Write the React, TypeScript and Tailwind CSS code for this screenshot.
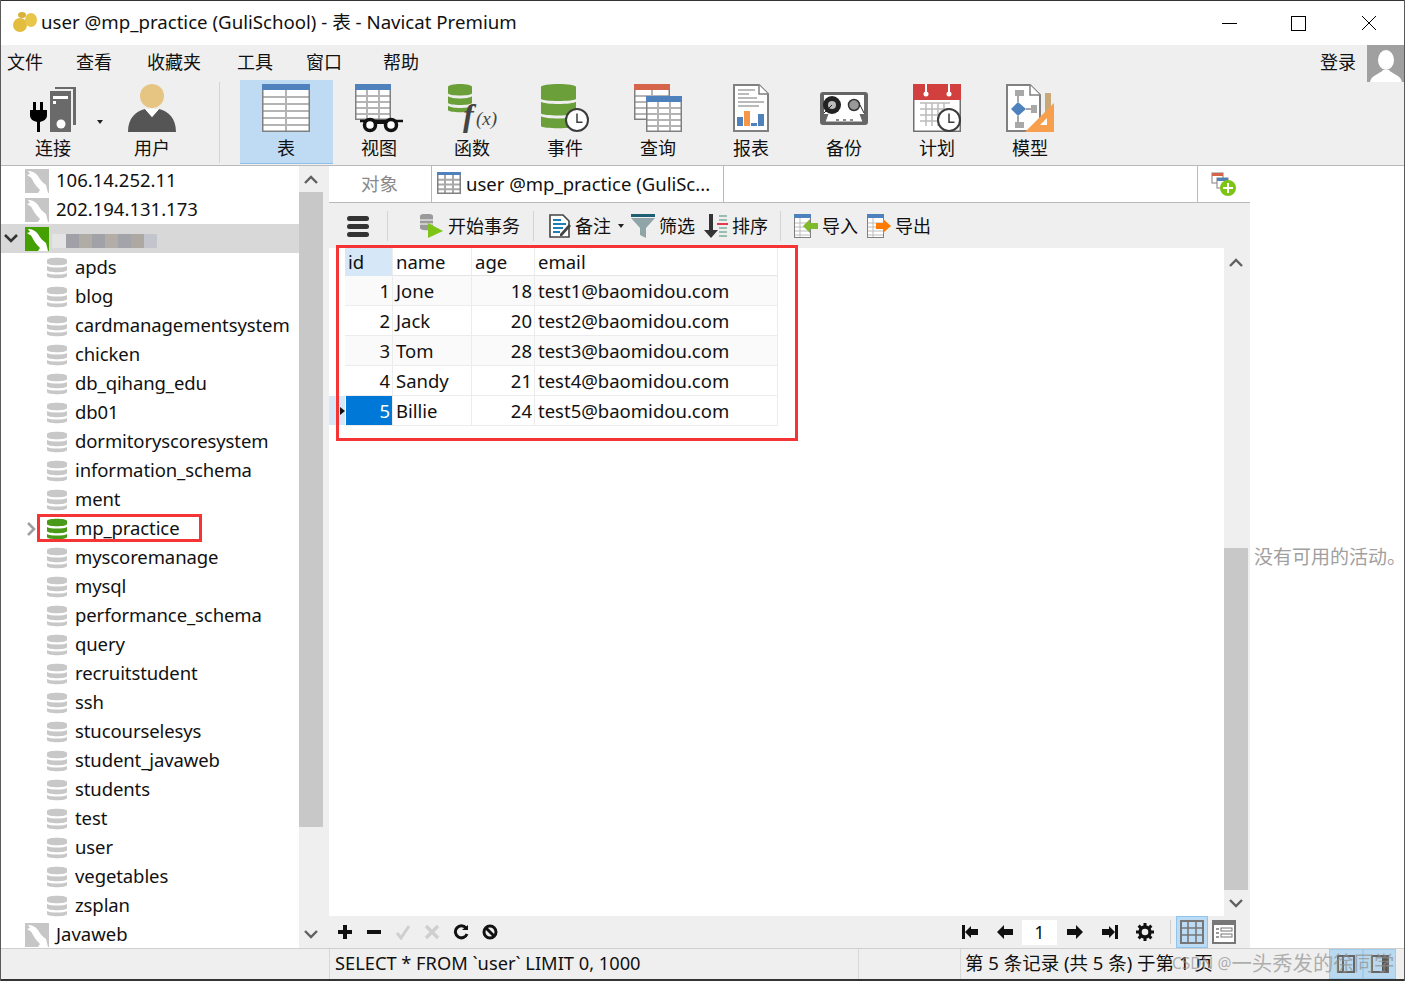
import React from "react";

// Navicat Premium main window

const dbs = ["apds","blog","cardmanagementsystem","chicken","db_qihang_edu","db01","dormitoryscoresystem","information_schema","ment","mp_practice","myscoremanage","mysql","performance_schema","query","recruitstudent","ssh","stucourselesys","student_javaweb","students","test","user","vegetables","zsplan"];

const rows = [
  { id: 1, name: "Jone", age: 18, email: "test1@baomidou.com" },
  { id: 2, name: "Jack", age: 20, email: "test2@baomidou.com" },
  { id: 3, name: "Tom", age: 28, email: "test3@baomidou.com" },
  { id: 4, name: "Sandy", age: 21, email: "test4@baomidou.com" },
  { id: 5, name: "Billie", age: 24, email: "test5@baomidou.com" },
];

function Dolphin({ bg = "#c6c6c6" }: { bg?: string }) {
  return (
    <svg width="24" height="24" viewBox="0 0 24 24" className="shrink-0">
      <rect width="24" height="24" fill={bg} />
      <path d="M3 2 C6 2 10 3 13 7 C15 11 18 14 21 16 L23 24 L13 24 L15 21 C13 19 10 16 8 12 C7 10 6 8 5 8 L2 6 L5 5 Z" fill="#fff" />
    </svg>
  );
}

function DbSmall({ color = "#c8c8c8" }: { color?: string }) {
  return (
    <svg width="20" height="22" viewBox="0 0 20 22" className="shrink-0">
      <path d="M0 3 C0 0 20 0 20 3 L20 6 C20 9 0 9 0 6 Z" fill={color} />
      <path d="M0 9 C3 11 17 11 20 9 L20 13 C20 16 0 16 0 13 Z" fill={color} />
      <path d="M0 16 C3 18 17 18 20 16 L20 19 C20 22 0 22 0 19 Z" fill={color} />
    </svg>
  );
}

function Cells({ x, y, w, h, cols, rws, head, headH, line = "#b4b4b4", frame = "#808080" }: { x: number; y: number; w: number; h: number; cols: number; rws: number; head: string; headH: number; line?: string; frame?: string }) {
  const bodyY = y + headH;
  const bodyH = h - headH;
  return (
    <g>
      <rect x={x} y={y} width={w} height={h} fill="#fff" />
      {Array.from({ length: rws - 1 }).map((_, i) => (
        <rect key={i} x={x} y={bodyY + ((i + 1) * bodyH) / rws - 1} width={w} height="2" fill={line} />
      ))}
      {Array.from({ length: cols - 1 }).map((_, i) => (
        <rect key={i} x={x + ((i + 1) * w) / cols - 1} y={bodyY} width="2" height={bodyH} fill={line} />
      ))}
      <rect x={x + 0.75} y={y + 0.75} width={w - 1.5} height={h - 1.5} fill="none" stroke={frame} strokeWidth="1.5" />
      <rect x={x} y={y} width={w} height={headH} fill={head} />
    </g>
  );
}

function Clock({ cx, cy, r }: { cx: number; cy: number; r: number }) {
  return (
    <g>
      <circle cx={cx} cy={cy} r={r} fill="#fff" stroke="#3c3c3c" strokeWidth="2" />
      <path d={`M${cx} ${cy - r * 0.6} V${cy + r * 0.2} H${cx + r * 0.5}`} fill="none" stroke="#3c3c3c" strokeWidth="1.5" />
    </g>
  );
}

function BigDb({ x, w, h }: { x: number; w: number; h: number }) {
  const seg = h / 3;
  return (
    <g fill="#6a9f3a">
      <path d={`M${x} 3 C${x} -1 ${x + w} -1 ${x + w} 3 V${seg} C${x + w} ${seg + 3} ${x} ${seg + 3} ${x} ${seg} Z`} />
      <path d={`M${x} ${seg + 3} C${x + 4} ${seg + 6} ${x + w - 4} ${seg + 6} ${x + w} ${seg + 3} V${2 * seg} C${x + w} ${2 * seg + 3} ${x} ${2 * seg + 3} ${x} ${2 * seg} Z`} />
      <path d={`M${x} ${2 * seg + 3} C${x + 4} ${2 * seg + 6} ${x + w - 4} ${2 * seg + 6} ${x + w} ${2 * seg + 3} V${h - 2} C${x + w} ${h + 1} ${x} ${h + 1} ${x} ${h - 2} Z`} />
    </g>
  );
}

const Svg48 = ({ children }: { children: React.ReactNode }) => (
  <svg width="48" height="48" viewBox="0 0 48 48" className="overflow-visible">{children}</svg>
);

const toolIcons: Record<string, React.ReactNode> = {
  conn: (
    <Svg48>
      <path d="M4 18 h3 v8 h4 v-8 h3 v8 h4 v5 c0 4 -3 6 -7 7 v10 h-3 v-10 c-4 -1 -7 -3 -7 -7 v-5 h3 z" fill="#000" />
      <path d="M26 3 h21 v38 h-3 V5 h-18 z" fill="#6a6a6a" />
      <rect x="21" y="7" width="21" height="41" fill="#6a6a6a" />
      <rect x="24" y="12" width="15" height="3" fill="#fff" />
      <rect x="24" y="17" width="3" height="3" fill="#fff" />
      <circle cx="32" cy="40" r="4.5" fill="#fff" />
    </Svg48>
  ),
  user: (
    <Svg48>
      <circle cx="24" cy="12" r="12" fill="#e6c583" />
      <path d="M0 48 C0 34 8 27 17 25 L24 33 L31 25 C40 27 48 34 48 48 Z" fill="#555" />
      <path d="M17 25 H31 L24 33 Z" fill="#fff" />
    </Svg48>
  ),
  table: (
    <Svg48>
      <Cells x={0} y={0} w={48} h={48} cols={2} rws={6} head="#4f81bd" headH={6} />
    </Svg48>
  ),
  view: (
    <Svg48>
      <Cells x={0} y={0} w={36} h={36} cols={3} rws={5} head="#4f81bd" headH={6} />
      <path d="M5 37 H48" stroke="#111" strokeWidth="2.5" />
      <circle cx="15" cy="41" r="5.5" fill="#fff" stroke="#111" strokeWidth="3.5" />
      <circle cx="36" cy="41" r="5.5" fill="#fff" stroke="#111" strokeWidth="3.5" />
      <path d="M20 39 H31" stroke="#111" strokeWidth="2" />
    </Svg48>
  ),
  func: (
    <Svg48>
      <BigDb x={0} w={24} h={28} />
      <text x="15" y="42" fontFamily="'Liberation Serif',serif" fontStyle="italic" fontWeight="700" fontSize="32" fill="#444">f</text>
      <text x="28" y="41" fontFamily="'Liberation Serif',serif" fontStyle="italic" fontSize="19" fill="#444">(x)</text>
    </Svg48>
  ),
  event: (
    <Svg48>
      <BigDb x={0} w={35} h={44} />
      <Clock cx={36} cy={36} r={11} />
    </Svg48>
  ),
  query: (
    <Svg48>
      <Cells x={0} y={0} w={36} h={36} cols={2} rws={5} head="#d6644a" headH={6} />
      <Cells x={12} y={12} w={36} h={36} cols={3} rws={5} head="#4f81bd" headH={6} />
    </Svg48>
  ),
  report: (
    <Svg48>
      <g transform="translate(6 0)">
        <path d="M1 1 H26 L35 10 V47 H1 Z" fill="#fff" stroke="#808080" strokeWidth="2" />
        <path d="M26 1 V10 H35" fill="#fff" stroke="#808080" strokeWidth="1.5" />
        <path d="M5 6 H22 M5 10 H16 M5 14 H24 M5 18 H31 M5 22 H26" stroke="#777" strokeWidth="1.2" />
        <rect x="4" y="33" width="6" height="9" fill="#4f81bd" />
        <rect x="11" y="27" width="6" height="15" fill="#f79646" />
        <rect x="18" y="39" width="6" height="3" fill="#4f81bd" />
        <rect x="25" y="30" width="6" height="12" fill="#4f81bd" />
      </g>
    </Svg48>
  ),
  backup: (
    <Svg48>
      <rect x="0" y="8" width="48" height="33" rx="3" fill="#666" />
      <rect x="4" y="11" width="40" height="19" fill="#fff" />
      <circle cx="12" cy="21" r="9" fill="#222" />
      <circle cx="12" cy="21" r="4" fill="#bbb" />
      <circle cx="34" cy="21" r="5.5" fill="#999" stroke="#333" strokeWidth="1.5" />
      <path d="M4 29 L12 21 M40 21 L44 29" stroke="#222" />
      <path d="M8 30 L5 38 H43 L40 30" fill="#fff" stroke="#666" />
      <path d="M16 36 h3 M23 36 h3 M30 36 h3" stroke="#666" strokeWidth="1.5" />
    </Svg48>
  ),
  plan: (
    <Svg48>
      <rect x="0.75" y="10" width="46.5" height="37.25" fill="#fff" stroke="#707070" strokeWidth="1.5" />
      <rect x="0" y="0" width="48" height="16" fill="#d13f3f" />
      <path d="M13 0 V9 M36 0 V9" stroke="#fff" strokeWidth="2" />
      <circle cx="13" cy="10" r="2.5" fill="#fff" />
      <circle cx="36" cy="10" r="2.5" fill="#fff" />
      <path d="M7 19 H37 M7 25 H37 M7 31 H30 M7 37 H26 M13 19 V42 M19 19 V42 M25 19 V42 M31 19 V32" stroke="#bbb" strokeWidth="1.5" />
      <Clock cx={36} cy={36} r={11} />
    </Svg48>
  ),
  model: (
    <Svg48>
      <path d="M1 1 H24 L34 11 V47 H1 Z" fill="#fff" stroke="#808080" strokeWidth="2" />
      <path d="M24 1 V11 H34" fill="#fff" stroke="#808080" strokeWidth="1.5" />
      <rect x="9" y="6" width="9" height="6" fill="#a8a8a8" />
      <rect x="11" y="12" width="2" height="6" fill="#a8a8a8" />
      <path d="M5 25 L12 18 L20 25 L12 32 Z" fill="#4f81bd" />
      <rect x="20" y="24" width="7" height="2" fill="#a8a8a8" />
      <rect x="25" y="21" width="6" height="8" fill="#a8a8a8" />
      <rect x="11" y="32" width="2" height="6" fill="#a8a8a8" />
      <rect x="9" y="38" width="9" height="6" fill="#a8a8a8" />
      <rect x="39" y="9" width="6" height="24" fill="#c9a878" />
      <path d="M19 48 L48 19 V48 Z" fill="#f79f4d" />
      <path d="M34 41 L41 34 V41 Z" fill="#fff" />
    </Svg48>
  ),
};

function ToolButton({ icon, label, active }: { icon: string; label: string; active?: boolean }) {
  return (
    <div className={`w-[93px] h-[84px] flex flex-col items-center pt-[4px] pr-px ${active ? "bg-[#bfdbf3] border-b border-[#8fbfe6]" : ""}`}>
      <div className="h-[48px] flex items-start justify-center">{toolIcons[icon]}</div>
      <span className="mt-[3px] text-[18px] leading-[26px] text-[#111]">{label}</span>
    </div>
  );
}

function Chevron({ up }: { up?: boolean }) {
  return (
    <svg width="14" height="9" viewBox="0 0 14 9">
      <path d={up ? "M1 8 L7 2 L13 8" : "M1 1 L7 7 L13 1"} fill="none" stroke="#606060" strokeWidth="2.4" />
    </svg>
  );
}

const MiniTable = ({ arrow }: { arrow: "in" | "out" }) => (
  <svg width="24" height="24" viewBox="0 0 24 24">
    <rect x="0.5" y="0.5" width="16" height="23" fill="#fff" stroke="#808080" />
    <rect width="17" height="4" fill="#4f81bd" />
    <path d="M1 9 H16 M1 13 H16 M1 17 H16 M1 21 H16 M6 4 V23" stroke="#bbb" />
    {arrow === "in" ? (
      <path d="M24 9 H16 V5 L9 12 L16 19 V15 H24 Z" fill="#7fba2b" />
    ) : (
      <path d="M9 9 H16 V5 L24 12 L16 19 V15 H9 Z" fill="#ff7a00" />
    )}
  </svg>
);

const Sep = ({ className = "" }: { className?: string }) => <div className={`w-px h-[30px] bg-[#d4d4d4] shrink-0 ${className}`} />;

export default function App() {
  return (
    <div className="w-[1405px] h-[981px] flex flex-col overflow-hidden bg-white text-[#111] border-x border-[#5a5a5a] font-['Noto_Sans','Noto_Sans_CJK_SC',sans-serif]">
      <div className="h-px bg-[#333] shrink-0 -mx-px" />

      {/* title bar */}
      <div className="h-[44px] shrink-0 flex items-center bg-white">
        <svg width="26" height="22" viewBox="0 0 26 22" className="ml-[11px] mb-[2px]">
          <ellipse cx="8" cy="14" rx="7" ry="7" fill="#e2bd3e" />
          <ellipse cx="19" cy="9" rx="6" ry="7" fill="#e8c64a" />
          <ellipse cx="10" cy="4" rx="4" ry="3" fill="#d8b23a" />
        </svg>
        <span className="ml-[3px] mb-[2px] text-[18.65px] leading-[26px] whitespace-nowrap">user @mp_practice (GuliSchool) - 表 - Navicat Premium</span>
        <div className="ml-auto flex items-center">
          <div className="w-[15px] h-px bg-black" />
          <div className="ml-[54px] w-[15px] h-[15px] border border-black" />
          <svg width="16" height="16" viewBox="0 0 16 16" className="ml-[55px] mr-[27px]">
            <path d="M1 1 L15 15 M15 1 L1 15" stroke="#000" strokeWidth="1" />
          </svg>
        </div>
      </div>

      {/* menu */}
      <div className="h-[35px] shrink-0 bg-[#efefef] flex items-center text-[18px] relative">
        <span className="ml-[6px]">文件</span>
        <span className="ml-[33px]">查看</span>
        <span className="ml-[35px]">收藏夹</span>
        <span className="ml-[36px]">工具</span>
        <span className="ml-[33px]">窗口</span>
        <span className="ml-[41px]">帮助</span>
        <span className="ml-auto mr-[11px]">登录</span>
        <div className="w-[37px] h-[37px] bg-[#a0a0a0] self-start flex items-end justify-center overflow-hidden">
          <svg width="36" height="33" viewBox="0 0 36 33">
            <ellipse cx="18" cy="11" rx="8" ry="10" fill="#fff" />
            <path d="M2 33 C3 26 12 25 15 21 H21 C24 25 33 26 34 33 Z" fill="#fff" />
          </svg>
        </div>
      </div>

      {/* main toolbar */}
      <div className="h-[86px] shrink-0 bg-[#efefef] border-b border-[#b9b9b9] flex items-start pl-[6px]">
        <div className="relative">
          <ToolButton icon="conn" label="连接" />
          <svg width="6" height="4" viewBox="0 0 6 4" className="absolute left-[90px] top-[40px]">
            <path d="M0 0 H6 L3 4 Z" fill="#222" />
          </svg>
        </div>
        <div className="ml-[6px]"><ToolButton icon="user" label="用户" /></div>
        <div className="ml-[20px] mt-[2px] w-px h-[81px] bg-[#d4d4d4]" />
        <div className="ml-[20px] flex">
          <ToolButton icon="table" label="表" active />
          <ToolButton icon="view" label="视图" />
          <ToolButton icon="func" label="函数" />
          <ToolButton icon="event" label="事件" />
          <ToolButton icon="query" label="查询" />
          <ToolButton icon="report" label="报表" />
          <ToolButton icon="backup" label="备份" />
          <ToolButton icon="plan" label="计划" />
          <ToolButton icon="model" label="模型" />
        </div>
      </div>

      {/* body */}
      <div className="h-[782px] shrink-0 flex">
        {/* connection tree */}
        <div className="w-[298px] shrink-0 flex flex-col text-[18.5px] overflow-hidden">
          <TreeConn label="106.14.252.11" />
          <TreeConn label="202.194.131.173" />
          <div className="h-[29px] shrink-0 bg-[#d8d8d8] flex items-center relative">
            <svg width="14" height="9" viewBox="0 0 14 9" className="absolute left-[3px] top-[10px]">
              <path d="M1 1 L7 7 L13 1" fill="none" stroke="#333" strokeWidth="2.6" />
            </svg>
            <div className="ml-[24px]"><Dolphin bg="#43a000" /></div>
            <div className="ml-[3px] mt-[4px] flex h-[14px]">
              <div className="w-[14px] bg-[#e4e4e4]" />
              <div className="w-[13px] bg-[#a0a0a6]" />
              <div className="w-[13px] bg-[#b0aca6]" />
              <div className="w-[13px] bg-[#a0a2a8]" />
              <div className="w-[13px] bg-[#b3ada7]" />
              <div className="w-[13px] bg-[#a2a4a9]" />
              <div className="w-[13px] bg-[#aea8a2]" />
              <div className="w-[13px] bg-[#c2c6cc]" />
            </div>
          </div>
          {dbs.map((d) => (
            <div key={d} className="h-[29px] shrink-0 flex items-center relative whitespace-nowrap">
              {d === "mp_practice" && (
                <>
                  <svg width="9" height="14" viewBox="0 0 9 14" className="absolute left-[26px] top-[8px]">
                    <path d="M1 1 L7 7 L1 13" fill="none" stroke="#a0a0a0" strokeWidth="2.6" />
                  </svg>
                  <div className="absolute left-[36px] top-[0px] w-[165px] h-[28px] border-[3px] border-[#f53535]" />
                </>
              )}
              <div className="ml-[46px]"><DbSmall color={d === "mp_practice" ? "#4a9a1a" : "#c8c8c8"} /></div>
              <span className="ml-[8px] mb-[2px] relative tracking-[-0.1px]">{d}</span>
            </div>
          ))}
          <TreeConn label="Javaweb" />
        </div>

        {/* tree scrollbar */}
        <div className="w-[30px] shrink-0 bg-[#efefef] flex flex-col">
          <div className="w-[24px] h-[26px] flex items-center justify-center"><Chevron up /></div>
          <div className="w-[24px] h-[635px] bg-[#c8c8c8]" />
          <div className="w-[24px] mt-auto h-[27px] flex items-center justify-center"><Chevron /></div>
        </div>

        {/* centre */}
        <div className="w-[921px] shrink-0 flex flex-col">
          <div className="h-[37px] shrink-0 flex border-b border-[#b9b9b9] text-[18.5px]">
            <div className="w-[103px] border-r border-[#b9b9b9] flex items-center justify-center pr-[1px] text-[#8a8a8a] text-[18.5px]">对象</div>
            <div className="w-[292px] border-r border-[#b9b9b9] flex items-center">
              <svg width="24" height="24" viewBox="0 0 24 24" className="ml-[5px]">
                <Cells x={0} y={0} w={24} h={22} cols={3} rws={4} head="#4f81bd" headH={3} line="#a8a8a8" />
              </svg>
              <span className="ml-[5px] whitespace-nowrap">user @mp_practice (GuliSc...</span>
            </div>
            <div className="flex-1" />
            <div className="w-[53px] border-l border-[#b9b9b9] flex items-center justify-center">
              <svg width="26" height="26" viewBox="0 0 26 26" className="mr-[1px]">
                <rect x="1" y="2" width="11" height="10" fill="#fff" stroke="#808080" />
                <rect x="1" y="2" width="11" height="3" fill="#d6644a" />
                <rect x="6" y="7" width="11" height="10" fill="#fff" stroke="#808080" />
                <rect x="6" y="7" width="11" height="3" fill="#4f81bd" />
                <circle cx="17" cy="17" r="8" fill="#7cc416" />
                <path d="M17 12 V22 M12 17 H22" stroke="#fff" strokeWidth="2" />
              </svg>
            </div>
          </div>

          {/* object toolbar */}
          <div className="h-[45px] shrink-0 bg-[#efefef] flex items-center pt-[1px] text-[18px] whitespace-nowrap">
            <div className="ml-[18px] w-[22px] flex flex-col gap-[3px] mt-[1px]">
              <div className="h-[5px] rounded-full bg-[#333]" />
              <div className="h-[5px] rounded-full bg-[#333]" />
              <div className="h-[5px] rounded-full bg-[#333]" />
            </div>
            <Sep className="ml-[18px]" />
            <svg width="24" height="24" viewBox="0 0 24 24" className="ml-[32px]">
              <path d="M0 2 C0 -1 13 -1 13 2 V14 C13 17 0 17 0 14 Z" fill="#9a9a9a" />
              <path d="M0 6 H13 M0 10 H13" stroke="#fff" />
              <path d="M8 9 L23 17 L8 24 Z" fill="#7cc416" />
            </svg>
            <span className="ml-[4px]">开始事务</span>
            <Sep className="ml-[13px]" />
            <svg width="23" height="24" viewBox="0 0 23 24" className="ml-[15px]">
              <path d="M1 1 H14 L20 7 V23 H1 Z" fill="#fff" stroke="#444" strokeWidth="1.6" />
              <path d="M4 6 H12 M4 10 H17 M4 14 H14 M4 18 H11" stroke="#1d7fb8" strokeWidth="1.8" />
              <path d="M22 12 L13 22 L11 22 L11 20 L20 10 Z" fill="#444" />
            </svg>
            <span className="ml-[3px]">备注</span>
            <svg width="6" height="4" viewBox="0 0 6 4" className="ml-[7px]"><path d="M0 0 H6 L3 4 Z" fill="#222" /></svg>
            <svg width="24" height="24" viewBox="0 0 24 24" className="ml-[7px]">
              <rect width="24" height="3" fill="#1f5f73" />
              <path d="M0 4 H24 L15 14 V24 L9 21 V14 Z" fill="#8fa5a8" />
            </svg>
            <span className="ml-[4px]">筛选</span>
            <svg width="24" height="24" viewBox="0 0 24 24" className="ml-[9px]">
              <path d="M5 0 H9 V16 H14 L7 24 L0 16 H5 Z" fill="#333" />
              <path d="M15 2 H23 M15 6 H23 M15 14 H23 M15 18 H23 M15 22 H23" stroke="#7fae9a" strokeWidth="1.5" />
              <path d="M13 10 H24" stroke="#e0263c" strokeWidth="1.8" />
            </svg>
            <span className="ml-[4px]">排序</span>
            <Sep className="ml-[12px]" />
            <div className="ml-[13px] flex"><MiniTable arrow="in" /></div>
            <span className="ml-[4px]">导入</span>
            <div className="ml-[9px] flex"><MiniTable arrow="out" /></div>
            <span className="ml-[4px]">导出</span>
          </div>

          {/* data grid */}
          <div className="h-[668px] shrink-0 flex">
            <div className="w-[895px] shrink-0 relative text-[18.5px]">
              <div className="ml-[16px] w-[433px] border-r border-[#ececec]">
                <div className="grid grid-cols-[48px_79px_63px_242px] h-[28px] border-b border-[#e4e4e4]">
                  <div className="bg-[#d6e8f7] pl-[3px] flex items-center border-r border-[#ececec]">id</div>
                  <div className="pl-[3px] flex items-center border-r border-[#ececec]">name</div>
                  <div className="pl-[3px] flex items-center border-r border-[#ececec]">age</div>
                  <div className="pl-[3px] flex items-center">email</div>
                </div>
                {rows.map((r) => (
                  <div key={r.id} className={`grid grid-cols-[48px_79px_63px_242px] h-[30px] border-b border-[#ececec] relative ${r.id % 2 === 1 && r.id !== 5 ? "bg-[#fafafa]" : ""}`}>
                    {r.id === 5 && (
                      <div className="absolute left-[-16px] top-0 w-[16px] h-[29px] bg-[#d6e8f7] flex items-center justify-end">
                        <svg width="5" height="8" viewBox="0 0 5 8"><path d="M0 0 L5 4 L0 8 Z" fill="#111" /></svg>
                      </div>
                    )}
                    <div className={`flex items-center justify-end pr-[2px] border-r border-[#ececec] ${r.id === 5 ? "ml-px bg-[#0078d7] text-white" : ""}`}>{r.id}</div>
                    <div className="flex items-center pl-[3px] border-r border-[#ececec]">{r.name}</div>
                    <div className="flex items-center justify-end pr-[2px] border-r border-[#ececec]">{r.age}</div>
                    <div className="flex items-center pl-[3px]">{r.email}</div>
                  </div>
                ))}
              </div>
              <div className="absolute left-[7px] top-[-3px] w-[462px] h-[196px] border-[3px] border-[#f53535]" />
            </div>
            <div className="w-[26px] shrink-0 bg-[#efefef] flex flex-col items-start">
              <div className="w-[24px] h-[28px] flex items-center justify-center"><Chevron up /></div>
              <div className="w-[24px] h-[342px] mt-[272px] bg-[#c8c8c8]" />
              <div className="w-[24px] h-[26px] flex items-center justify-center"><Chevron /></div>
            </div>
          </div>

          {/* grid footer */}
          <div className="h-[32px] shrink-0 bg-[#efefef] flex items-center">
            <svg width="16" height="16" viewBox="0 0 16 16" className="ml-[8px]"><path d="M6 1 H10 V6 H15 V10 H10 V15 H6 V10 H1 V6 H6 Z" fill="#111" /></svg>
            <svg width="16" height="16" viewBox="0 0 16 16" className="ml-[13px]"><rect x="1" y="6" width="14" height="4" fill="#111" /></svg>
            <svg width="16" height="16" viewBox="0 0 16 16" className="ml-[13px]"><path d="M2 9 L6 14 L14 2" fill="none" stroke="#cfcfcf" strokeWidth="3" /></svg>
            <svg width="16" height="16" viewBox="0 0 16 16" className="ml-[13px]"><path d="M2 2 L14 14 M14 2 L2 14" stroke="#cfcfcf" strokeWidth="3.4" /></svg>
            <svg width="16" height="16" viewBox="0 0 16 16" className="ml-[13px]"><path d="M13 4 A6 6 0 1 0 14 10" fill="none" stroke="#111" strokeWidth="3" /><path d="M9 6 H15 V1 Z" fill="#111" /></svg>
            <svg width="16" height="16" viewBox="0 0 16 16" className="ml-[13px]"><circle cx="8" cy="8" r="6" fill="none" stroke="#111" strokeWidth="3" /><path d="M4 4 L12 12" stroke="#111" strokeWidth="3" /></svg>

            <svg width="16" height="14" viewBox="0 0 16 14" className="ml-[464px]"><rect x="0" y="0" width="3" height="14" fill="#111" /><path d="M3 7 L9 1 V4 H16 V10 H9 V13 Z" fill="#111" /></svg>
            <svg width="16" height="14" viewBox="0 0 16 14" className="ml-[19px]"><path d="M0 7 L7 0 V4 H16 V10 H7 V14 Z" fill="#111" /></svg>
            <div className="ml-[9px] w-[35px] h-[25px] bg-white flex items-center justify-center text-[18px]">1</div>
            <svg width="16" height="14" viewBox="0 0 16 14" className="ml-[10px]"><path d="M16 7 L9 0 V4 H0 V10 H9 V14 Z" fill="#111" /></svg>
            <svg width="16" height="14" viewBox="0 0 16 14" className="ml-[19px]"><path d="M13 7 L7 1 V4 H0 V10 H7 V13 Z" fill="#111" /><rect x="13" y="0" width="3" height="14" fill="#111" /></svg>
            <svg width="18" height="18" viewBox="0 0 18 18" className="ml-[18px]">
              <circle cx="9" cy="9" r="5" fill="none" stroke="#111" strokeWidth="3.4" />
              <path d="M9 0 V4 M9 14 V18 M0 9 H4 M14 9 H18 M2.6 2.6 L5.4 5.4 M12.6 12.6 L15.4 15.4 M15.4 2.6 L12.6 5.4 M5.4 12.6 L2.6 15.4" stroke="#111" strokeWidth="3" />
            </svg>
            <div className="ml-[16px] w-px h-[24px] bg-[#d0d0d0]" />
            <div className="ml-[5px] w-[32px] h-[32px] bg-[#bcdcf5] border border-[#8ec4ee] flex items-center justify-center">
              <svg width="24" height="24" viewBox="0 0 24 24">
                <rect x="1" y="1" width="22" height="22" fill="none" stroke="#777" strokeWidth="2" />
                <path d="M1 8 H23 M1 15 H23 M8 1 V23 M16 1 V23" stroke="#777" strokeWidth="1.6" />
              </svg>
            </div>
            <svg width="24" height="24" viewBox="0 0 24 24" className="ml-[4px]">
              <rect x="1" y="1" width="22" height="22" fill="#fff" stroke="#777" strokeWidth="2" />
              <rect x="1" y="1" width="22" height="4" fill="#777" />
              <path d="M4 9 H7 M4 13 H7 M4 17 H7" stroke="#777" strokeWidth="1.5" />
              <rect x="9" y="8" width="11" height="3" fill="none" stroke="#777" />
              <rect x="9" y="14" width="11" height="3" fill="none" stroke="#777" />
            </svg>
          </div>
        </div>

        {/* activity panel */}
        <div className="flex-1 flex items-center justify-center pl-[4px] text-[#a0a0a0] text-[19px] whitespace-nowrap">没有可用的活动。</div>
      </div>

      {/* status bar */}
      <div className="h-[31px] shrink-0 bg-[#efefef] border-t border-[#cfcfcf] flex items-center relative text-[18.5px] whitespace-nowrap">
        <div className="ml-[328px] w-px h-full bg-[#d8d8d8]" />
        <span className="ml-[5px] mb-[2px] text-[18.25px]">SELECT * FROM `user` LIMIT 0, 1000</span>
        <div className="absolute left-[857px] top-0 w-px h-full bg-[#d8d8d8]" />
        <div className="absolute left-[959px] top-0 w-px h-full bg-[#d8d8d8]" />
        <span className="absolute left-[964px] top-0">第 5 条记录 (共 5 条) 于第 1 页</span>
        <div className="absolute left-[1328px] top-0 w-[34px] h-full bg-[#b9d9f0] border border-[#a0ccec] flex items-center justify-center">
          <svg width="22" height="22" viewBox="0 0 22 22"><rect x="3" y="3" width="16" height="16" fill="none" stroke="#666" strokeWidth="2" /><path d="M8 4 V18" stroke="#666" strokeWidth="2" /></svg>
        </div>
        <div className="absolute left-[1362px] top-0 w-[33px] h-full bg-[#b9d9f0] border border-[#a0ccec] flex items-center justify-center">
          <svg width="22" height="22" viewBox="0 0 22 22"><rect x="3" y="3" width="16" height="16" fill="none" stroke="#666" strokeWidth="2" /><rect x="13" y="4" width="5" height="14" fill="#555" /></svg>
        </div>
        <span className="absolute left-[1171px] top-[-1px] text-[#8f8f8f]/70 flex items-center">
          <span className="text-[15.5px]">CSDN @</span>
          <span className="text-[20.4px]">一头秀发的徐同学</span>
        </span>
      </div>
      <div className="h-[2px] shrink-0 bg-[#333] -mx-px" />
    </div>
  );
}

function TreeConn({ label }: { label: string }) {
  return (
    <div className="h-[29px] shrink-0 flex items-center whitespace-nowrap">
      <div className="ml-[24px]"><Dolphin /></div>
      <span className="ml-[7px] mb-[2px]">{label}</span>
    </div>
  );
}
